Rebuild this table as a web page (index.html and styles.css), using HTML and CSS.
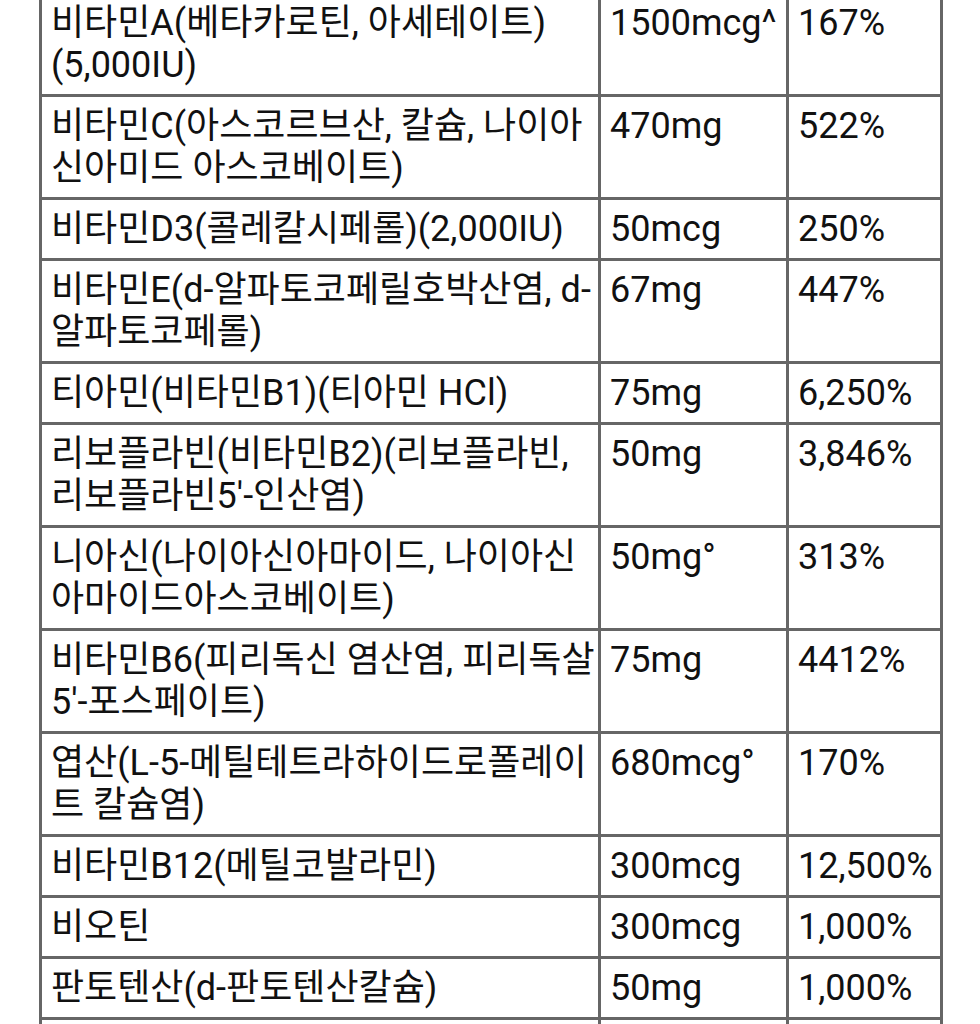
FILE: index.html
```html
<!DOCTYPE html>
<html lang="ko">
<head>
<meta charset="utf-8">
<link rel="stylesheet" href="styles.css">
</head>
<body>
<table class="facts">
  <colgroup>
    <col class="c-name">
    <col class="c-amt">
    <col class="c-dv">
  </colgroup>
  <tbody>
    <tr><td>비타민A(베타카로틴, 아세테이트)(5,000IU)</td><td>1500mcg^</td><td>167%</td></tr>
    <tr><td>비타민C(아스코르브산, 칼슘, 나이아신아미드 아스코베이트)</td><td>470mg</td><td>522%</td></tr>
    <tr><td>비타민D3(콜레칼시페롤)(2,000IU)</td><td>50mcg</td><td>250%</td></tr>
    <tr><td>비타민E(d-알파토코페릴호박산염, d-알파토코페롤)</td><td>67mg</td><td>447%</td></tr>
    <tr><td>티아민(비타민B1)(티아민 HCl)</td><td>75mg</td><td>6,250%</td></tr>
    <tr><td>리보플라빈(비타민B2)(리보플라빈, 리보플라빈5'-인산염)</td><td>50mg</td><td>3,846%</td></tr>
    <tr><td>니아신(나이아신아마이드, 나이아신아마이드아스코베이트)</td><td>50mg°</td><td>313%</td></tr>
    <tr><td>비타민B6(피리독신 염산염, 피리독살5'-포스페이트)</td><td>75mg</td><td>4412%</td></tr>
    <tr><td>엽산(L-5-메틸테트라하이드로폴레이트 칼슘염)</td><td>680mcg°</td><td>170%</td></tr>
    <tr><td>비타민B12(메틸코발라민)</td><td>300mcg</td><td>12,500%</td></tr>
    <tr><td>비오틴</td><td>300mcg</td><td>1,000%</td></tr>
    <tr><td>판토텐산(d-판토텐산칼슘)</td><td>50mg</td><td>1,000%</td></tr>
    <tr><td>요오드(요오드화칼륨)</td><td>150mcg</td><td>100%</td></tr>
  </tbody>
</table>
</body>
</html>
```
FILE: styles.css
```css
html, body {
  margin: 0;
  padding: 0;
  background: #ffffff;
}

body {
  font-family: Roboto, "Noto Sans CJK KR", sans-serif;
  font-size: 36px;
  line-height: 42px;
  color: #111111;
}

.facts {
  margin: -9px 0 0 39px;
  width: 904px;
  table-layout: fixed;
  border-collapse: separate;
  border-spacing: 0;
  border-left: 3px solid #666666;
  border-top: 3px solid #666666;
}

.c-name { width: 559px; }
.c-amt { width: 188px; }
.c-dv { width: 154px; }

.facts td {
  box-sizing: border-box;
  padding: 8px 0 8px 9px;
  vertical-align: top;
  border-right: 3px solid #666666;
  border-bottom: 3px solid #666666;
  word-break: normal;
  line-break: normal;
}
```
